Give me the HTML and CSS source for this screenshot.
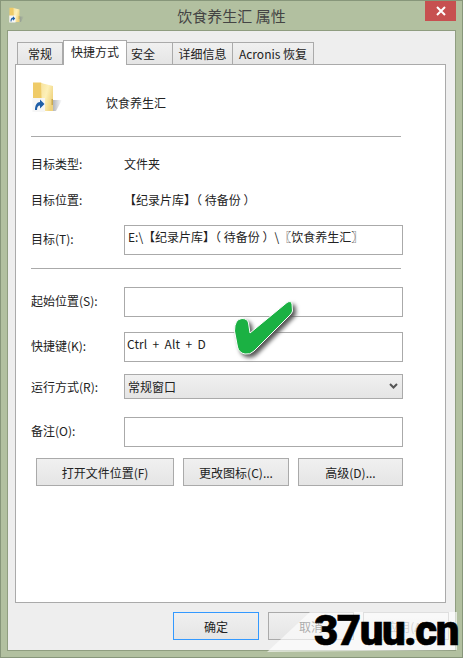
FILE: index.html
```html
<!DOCTYPE html>
<html lang="zh">
<head>
  <meta charset="UTF-8" />
  <title>饮食养生汇 属性</title>
  <link rel="stylesheet" href="styles.css">
</head>
<body>
  <svg class="defs" width="0" height="0">
    <defs>
      <linearGradient id="folderFront" x1="0" y1="0" x2="1" y2="0.6">
        <stop offset="0" stop-color="#f7e3a0" />
        <stop offset="0.5" stop-color="#fdf0b8" />
        <stop offset="1" stop-color="#efd27c" />
      </linearGradient>
      <linearGradient id="folderShade" x1="0" y1="0" x2="1" y2="0">
        <stop offset="0" stop-color="#80848c" stop-opacity="0.6" />
        <stop offset="1" stop-color="#80848c" stop-opacity="0" />
      </linearGradient>
      <symbol id="folder" viewBox="0 0 30 32">
        <path d="M21 19h9l-6 11h-3z" fill="url(#folderShade)" />
        <path d="M1 1.500h8l2 2V20H1z" fill="#efcb68" />
        <path d="M9 2l12 3v25H10z" fill="url(#folderFront)" />
        <path d="M19.500 18h1.500v6h-1.500z" fill="#c9a84f" />
        <rect x="0.500" y="17" width="12.500" height="14" fill="#f6f6f6" />
        <path d="M3 29c0-5 2-8 5-8V18.500l4.500 4.500L8 27.500V24.500c-2 0-3 1.500-3 4.500z" fill="#1f5fa8" />
      </symbol>
    </defs>
  </svg>

  <div class="window">
    <header class="titlebar">
      <svg class="title-icon"><use href="#folder" /></svg>
      <span class="title-text">饮食养生汇 属性</span>
      <button class="close-btn">
        <svg width="10" height="10" viewBox="0 0 10 10"><path d="M1 1l8 8M9 1l-8 8" stroke="#fff" stroke-width="2" /></svg>
      </button>
    </header>

    <div class="content">
      <nav class="tabs">
        <span class="tab tab-first">常规</span>
        <span class="tab active">快捷方式</span>
        <span class="tab tab-safe">安全</span>
        <span class="tab tab-detail">详细信息</span>
        <span class="tab tab-acronis">Acronis 恢复</span>
      </nav>

      <main class="panel">
        <div class="head-row">
          <svg class="big-icon"><use href="#folder" /></svg>
          <span class="head-name">饮食养生汇</span>
        </div>
        <hr class="rule rule-top" />

        <div class="row row-type"><span>目标类型:</span><span>文件夹</span></div>
        <div class="row row-place"><span>目标位置:</span><span>【纪录片库】（ 待备份 ）</span></div>
        <div class="row row-target">
          <span class="label">目标(T):</span>
          <div class="input input-tall">E:\【纪录片库】（ 待备份 ）\〖饮食养生汇〗</div>
        </div>
        <hr class="rule rule-mid" />

        <div class="row row-start"><span class="label">起始位置(S):</span><div class="input"></div></div>
        <div class="row row-key"><span class="label">快捷键(K):</span><div class="input key-value">Ctrl + Alt + D</div></div>
        <div class="row row-run">
          <span>运行方式(R):</span>
          <div class="select">
            <span>常规窗口</span>
            <svg width="9" height="7" viewBox="0 0 9 7"><path d="M1 1l3.500 3.500L8 1" fill="none" stroke="#555" stroke-width="2" /></svg>
          </div>
        </div>
        <div class="row row-note"><span class="label">备注(O):</span><div class="input"></div></div>

        <div class="panel-buttons">
          <button class="btn btn-open">打开文件位置(F)</button>
          <button class="btn btn-icon">更改图标(C)...</button>
          <button class="btn btn-adv">高级(D)...</button>
        </div>

        <svg class="checkmark" width="70" height="70" viewBox="0 0 70 70">
          <path d="M4.500 36Q4.500 24 12 23.500Q17.500 23.500 18.500 28L20 38L57 7.500Q61 5 62 9L62.500 16Q62 18 60 20L24 56Q20 60 15 59Q9 58 7.500 52Z" fill="#1bb143" stroke="#fff" stroke-width="1" />
        </svg>
      </main>

      <footer class="actions">
        <button class="btn btn-action btn-default">确定</button>
        <button class="btn btn-action">取消</button>
        <button class="btn btn-action btn-off">应用(A)</button>
      </footer>
    </div>
  </div>

  <div class="watermark">
    <svg class="watermark-bg" width="190" height="40" viewBox="0 0 190 40"><path d="M0 40L43 0H190V38Z" fill="#fff" fill-opacity="0.62" /></svg>
    <span class="watermark-text">37uu.cn</span>
  </div>
</body>
</html>
```

FILE: styles.css
```css
* {
  box-sizing: border-box;
}

html, body {
  margin: 0;
  padding: 0;
}

body {
  width: 463px;
  height: 658px;
  overflow: hidden;
  position: relative;
  font-family: "Noto Sans CJK SC", "Open Sans", sans-serif;
  font-size: 12px;
  color: #222;
  background: #b2c0a0;
}

.defs {
  position: absolute;
}

.window {
  width: 463px;
  height: 658px;
  border: 1px solid #87967a;
  background: #b2c0a0;
  display: flex;
  flex-direction: column;
}

.titlebar {
  height: 29px;
  flex: none;
  display: flex;
  align-items: flex-start;
  position: relative;
  padding-left: 8px;
}

.title-icon {
  width: 15px;
  height: 16px;
  margin-top: 6px;
}

.title-text {
  position: absolute;
  left: 0;
  right: 0;
  top: 4px;
  text-align: center;
  font-size: 15px;
  line-height: 22px;
  color: #444;
}

.close-btn {
  position: absolute;
  top: 0;
  right: 6px;
  width: 31px;
  height: 20px;
  padding: 0;
  border: none;
  background: #c75050;
  display: flex;
  align-items: center;
  justify-content: center;
}

.content {
  width: 449px;
  height: 621px;
  margin-left: 6px;
  background: #eee;
  border: 1px solid #8f9d80;
  padding: 9px 0 0 7px;
  display: flex;
  flex-direction: column;
}

.tabs {
  display: flex;
  align-items: flex-end;
  height: 25px;
  flex: none;
  padding-left: 2px;
  position: relative;
  z-index: 1;
}

.tab {
  height: 22px;
  border: 1px solid #aaa;
  border-bottom: none;
  border-left: none;
  background: linear-gradient(#f0f0f0, #e5e5e5);
  display: flex;
  align-items: center;
  justify-content: center;
  margin-bottom: 1px;
}

.tab-first {
  width: 46px;
  border-left: 1px solid #aaa;
}

.tab.active {
  width: 64px;
  height: 25px;
  margin-bottom: 0;
  background: #fff;
  border-left: 1px solid #aaa;
  border-right: 1px solid #aaa;
  padding-bottom: 3px;
}

.tab-safe {
  width: 46px;
  justify-content: flex-start;
  padding-left: 4px;
}

.tab-detail {
  width: 60px;
}

.tab-acronis {
  width: 81px;
}

.panel {
  width: 431px;
  height: 539px;
  flex: none;
  margin-top: -1px;
  background: #fff;
  border: 1px solid #aaa;
  padding: 0 0 0 15px;
  display: flex;
  flex-direction: column;
  position: relative;
}

.head-row {
  display: flex;
  align-items: center;
  height: 33px;
  margin-top: 15px;
  margin-left: 1px;
}

.big-icon {
  width: 30px;
  height: 32px;
}

.head-name {
  margin-left: 44px;
  line-height: 20px;
  margin-top: 12px;
}

.rule {
  width: 370px;
  height: 1px;
  margin: 0;
  border: none;
  background: #aaa;
  flex: none;
}

.rule-top {
  margin-top: 23px;
}

.rule-mid {
  margin-top: 13px;
}

.row {
  display: flex;
  align-items: center;
  flex: none;
}

.row > span:first-child {
  width: 93px;
  flex: none;
}

.label {
  padding-bottom: 3px;
}

.row-type {
  height: 20px;
  margin-top: 16px;
}

.row-place {
  height: 20px;
  margin-top: 16px;
}

.row-target {
  margin-top: 16px;
}

.row-start {
  margin-top: 18px;
}

.row-key {
  margin-top: 15px;
}

.row-run {
  margin-top: 12px;
}

.row-note {
  margin-top: 18px;
}

.input {
  width: 279px;
  height: 30px;
  border: 1px solid #aaa;
  background: #fff;
  padding: 1px 0 0 3px;
  line-height: 20px;
}

.key-value {
  padding-left: 2px;
  word-spacing: 2.5px;
  letter-spacing: 0.1px;
}

.select {
  width: 279px;
  height: 25px;
  border: 1px solid #aaa;
  background: linear-gradient(#f0f0f0, #e5e5e5);
  display: flex;
  align-items: center;
  justify-content: space-between;
  padding: 0 4px 0 3px;
}

.panel-buttons {
  display: flex;
  gap: 9px;
  margin: 11px 0 0 5px;
}

.btn {
  height: 28px;
  padding: 0;
  border: 1px solid #aaa;
  background: linear-gradient(#f0f0f0, #e5e5e5);
  font-family: inherit;
  font-size: 12px;
  color: #222;
}

.btn-open {
  width: 138px;
}

.btn-icon {
  width: 106px;
}

.btn-adv {
  width: 105px;
}

.actions {
  display: flex;
  gap: 9px;
  margin: 9px 0 0 158px;
}

.btn-action {
  width: 86px;
}

.btn-default {
  border-color: #3399ff;
}

.btn-off {
  color: #888;
}

.checkmark {
  position: absolute;
  left: 214px;
  top: 230px;
  filter: drop-shadow(3px 3px 2px #555);
}

.watermark {
  position: absolute;
  left: 267px;
  top: 612px;
  width: 190px;
  height: 40px;
}

.watermark-bg {
  position: absolute;
  left: 0;
  top: 0;
}

.watermark-text {
  position: absolute;
  left: 47px;
  top: -6px;
  font-family: Roboto, sans-serif;
  font-weight: 900;
  font-size: 42px;
  line-height: 50px;
  color: #000;
  white-space: nowrap;
  letter-spacing: -1.5px;
  -webkit-text-stroke: 0.6px #000;
}
```
